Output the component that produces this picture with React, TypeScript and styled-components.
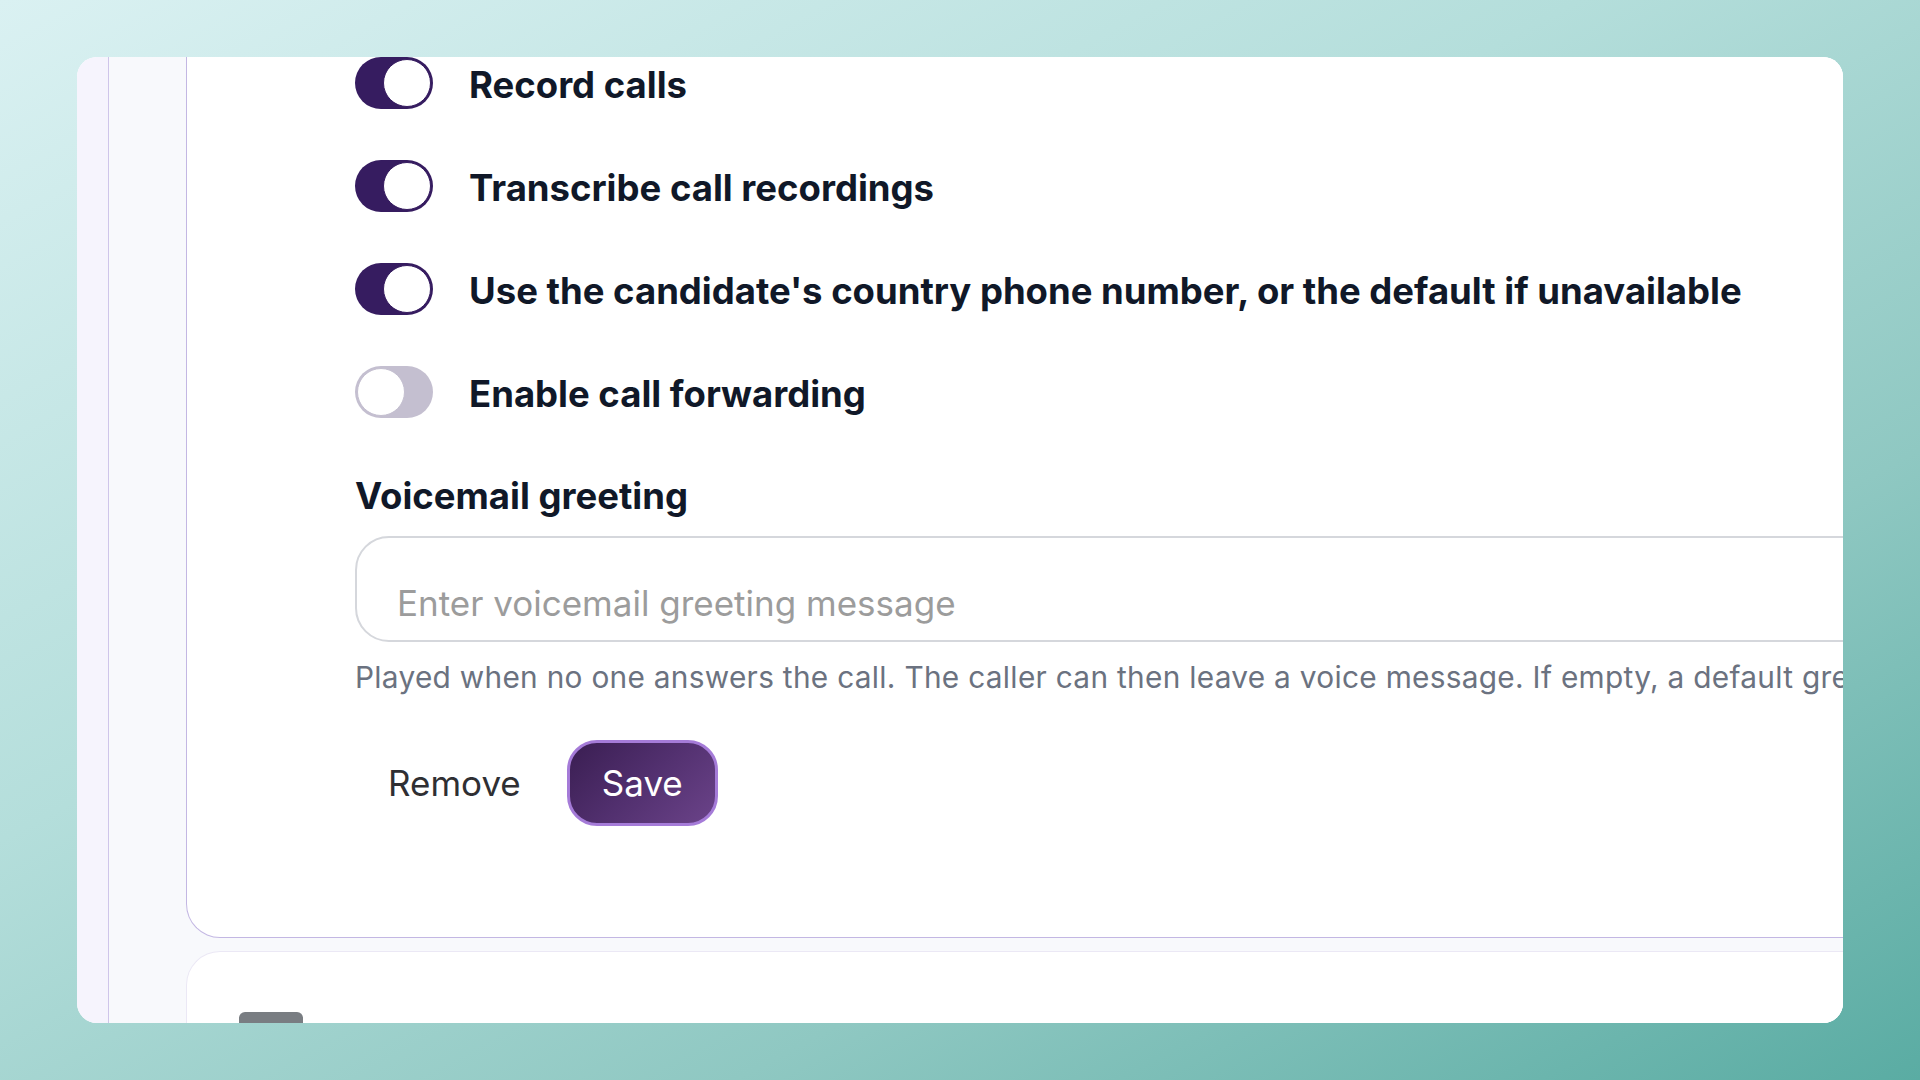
import React, { useState } from 'react';
import styled, { createGlobalStyle } from 'styled-components';

const GlobalStyle = createGlobalStyle`
  html, body {
    margin: 0;
    padding: 0;
  }
  body {
    font-family: Inter, "Noto Sans", "Liberation Sans", sans-serif;
    -webkit-font-smoothing: antialiased;
  }
  * {
    box-sizing: border-box;
  }
`;

type Setting = { id: string; label: string; on: boolean };

const initialSettings: Setting[] = [
  { id: 'record', label: 'Record calls', on: true },
  { id: 'transcribe', label: 'Transcribe call recordings', on: true },
  { id: 'country', label: "Use the candidate's country phone number, or the default if unavailable", on: true },
  { id: 'forward', label: 'Enable call forwarding', on: false },
];

const App = () => {
  const [settings, setSettings] = useState(initialSettings);
  const [greeting, setGreeting] = useState('');

  const toggle = (id: string) =>
    setSettings((list) => list.map((s) => (s.id === id ? { ...s, on: !s.on } : s)));

  return (
    <>
      <GlobalStyle />
      <Backdrop>
        <Window>
          <Rail />
          <Main>
            <Card>
              <SettingList>
                {settings.map((s) => (
                  <SettingRow key={s.id}>
                    <Switch $on={s.on} onClick={() => toggle(s.id)} aria-pressed={s.on}>
                      <Thumb $on={s.on} />
                    </Switch>
                    <SettingLabel>{s.label}</SettingLabel>
                  </SettingRow>
                ))}
              </SettingList>

              <FieldLabel>Voicemail greeting</FieldLabel>
              <GreetingInput
                placeholder="Enter voicemail greeting message"
                value={greeting}
                onChange={(e) => setGreeting(e.target.value)}
              />
              <HelpText>
                Played when no one answers the call. The caller can then leave a voice message. If empty, a default greeting will be used.
              </HelpText>

              <Actions>
                <GhostButton>Remove</GhostButton>
                <SaveButton>Save</SaveButton>
              </Actions>
            </Card>

            <NextCard>
              <NextCardChip />
            </NextCard>
          </Main>
        </Window>
      </Backdrop>
    </>
  );
};

export default App;

const Backdrop = styled.div`
  width: 1920px;
  height: 1080px;
  padding: 57px 77px;
  background: linear-gradient(152deg, #daf1f2 0%, #b4dedb 40%, #8fc8c2 70%, #5aaca3 100%);
  display: flex;
`;

const Window = styled.div`
  flex: 1;
  display: flex;
  background: #ffffff;
  border-radius: 20px;
  overflow: hidden;
`;

const Rail = styled.div`
  width: 32px;
  flex-shrink: 0;
  background: #f6f4fd;
  border-right: 1.5px solid #cfc5ea;
`;

const Main = styled.div`
  flex: 1;
  min-width: 0;
  background: #f8f9fc;
  padding-left: 77px;
  display: flex;
  flex-direction: column;
  gap: 13px;
  overflow: hidden;
`;

const Card = styled.section`
  width: 2000px;
  flex-shrink: 0;
  background: #ffffff;
  border-left: 1.5px solid #c3b7e3;
  border-bottom: 1.5px solid #c3b7e3;
  border-bottom-left-radius: 34px;
  padding: 0 0 111px 168px;
`;

const SettingList = styled.div`
  display: flex;
  flex-direction: column;
  gap: 51px;
`;

const SettingRow = styled.div`
  display: flex;
  align-items: center;
  gap: 36px;
`;

const Switch = styled.button<{ $on: boolean }>`
  width: 78px;
  height: 52px;
  flex-shrink: 0;
  padding: 2px;
  border: none;
  border-radius: 26px;
  background: ${(p) => (p.$on ? '#361c60' : '#c4bfd0')};
  display: flex;
  justify-content: ${(p) => (p.$on ? 'flex-end' : 'flex-start')};
  align-items: center;
  cursor: pointer;
`;

const Thumb = styled.span<{ $on: boolean }>`
  width: 48px;
  height: 48px;
  border-radius: 50%;
  background: #ffffff;
  border: 1.5px solid ${(p) => (p.$on ? '#361c60' : '#c4bfd0')};
`;

const SettingLabel = styled.span`
  padding-top: 4px;
  font-size: 36.5px;
  font-weight: 700;
  color: #101828;
  line-height: 48px;
  white-space: nowrap;
`;

const FieldLabel = styled.div`
  margin-top: 54px;
  font-size: 36.5px;
  font-weight: 700;
  line-height: 48px;
  color: #101828;
`;

const GreetingInput = styled.input`
  display: block;
  margin-top: 16px;
  width: 100%;
  height: 106px;
  padding: 28px 40px 0;
  border: 2px solid #d5d7dc;
  border-radius: 34px;
  font-family: inherit;
  font-size: 35px;
  color: #111827;
  background: #ffffff;
  outline: none;

  &::placeholder {
    color: #9c9c9c;
  }
`;

const HelpText = styled.p`
  margin: 14px 0 0;
  font-size: 29.8px;
  line-height: 42px;
  letter-spacing: 0.3px;
  color: #6b7280;
  white-space: nowrap;
`;

const Actions = styled.div`
  margin-top: 42px;
  display: flex;
  align-items: center;
  gap: 13px;
`;

const GhostButton = styled.button`
  height: 86px;
  padding: 0 33px;
  border: none;
  background: transparent;
  font-family: inherit;
  font-size: 35px;
  color: #2f2f33;
  cursor: pointer;
`;

const SaveButton = styled.button`
  height: 86px;
  width: 151px;
  border: 3px solid #a57bd8;
  border-radius: 30px;
  background: linear-gradient(135deg, #3a1e52 0%, #52306f 50%, #6b4389 100%);
  font-family: inherit;
  font-size: 35px;
  color: #ffffff;
  cursor: pointer;
`;

const NextCard = styled.section`
  width: 2000px;
  flex: 1;
  flex-shrink: 0;
  background: #ffffff;
  border-top: 1.5px solid #ebe8f5;
  border-left: 1.5px solid #ebe8f5;
  border-top-left-radius: 34px;
  padding: 60px 0 0 52px;
`;

const NextCardChip = styled.div`
  width: 64px;
  height: 40px;
  border-radius: 6px;
  background: #797d82;
`;
